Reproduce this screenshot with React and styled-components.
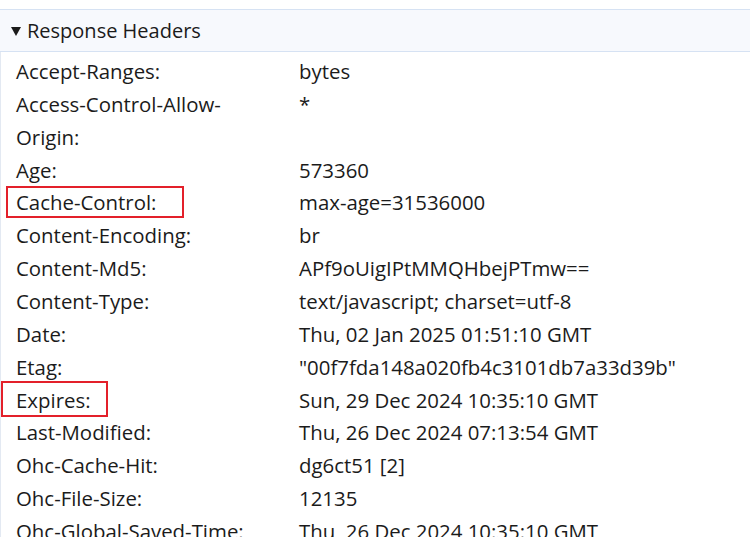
import React from 'react';
import styled, { createGlobalStyle } from 'styled-components';

const headers = [
  { name: 'Accept-Ranges:', value: 'bytes' },
  { name: 'Access-Control-Allow-Origin:', value: '*' },
  { name: 'Age:', value: '573360' },
  { name: 'Cache-Control:', value: 'max-age=31536000', mark: { left: -10, top: 0, width: 178, height: 32 } },
  { name: 'Content-Encoding:', value: 'br' },
  { name: 'Content-Md5:', value: 'APf9oUigIPtMMQHbejPTmw==' },
  { name: 'Content-Type:', value: 'text/javascript; charset=utf-8' },
  { name: 'Date:', value: 'Thu, 02 Jan 2025 01:51:10 GMT' },
  { name: 'Etag:', value: '"00f7fda148a020fb4c3101db7a33d39b"' },
  { name: 'Expires:', value: 'Sun, 29 Dec 2024 10:35:10 GMT', mark: { left: -15, top: -3, width: 107, height: 36 } },
  { name: 'Last-Modified:', value: 'Thu, 26 Dec 2024 07:13:54 GMT' },
  { name: 'Ohc-Cache-Hit:', value: 'dg6ct51 [2]' },
  { name: 'Ohc-File-Size:', value: '12135' },
  { name: 'Ohc-Global-Saved-Time:', value: 'Thu, 26 Dec 2024 10:35:10 GMT' },
];

const App = () => {
  return (
    <>
      <GlobalStyle />
      <Panel>
        <SectionHeader>
          <Arrow viewBox="0 0 10 9">
            <path d="M0 0 L10 0 L5 9 Z" fill="#1b1b1b" />
          </Arrow>
          Response Headers
        </SectionHeader>
        <HeaderList>
          {headers.map((item) => (
            <Row key={item.name}>
              <Name>
                {item.name}
                {item.mark && <Highlight $mark={item.mark} />}
              </Name>
              <Value>{item.value}</Value>
            </Row>
          ))}
        </HeaderList>
      </Panel>
    </>
  );
};

export default App;

const GlobalStyle = createGlobalStyle`
  html, body {
    margin: 0;
    padding: 0;
    background: #ffffff;
    overflow: hidden;
  }
  body {
    font-family: 'Open Sans', 'Noto Sans', sans-serif;
    color: #1b1b1b;
  }
`;

const Panel = styled.div`
  width: 750px;
  height: 537px;
  padding-top: 9px;
  box-sizing: border-box;
  overflow: hidden;
`;

const SectionHeader = styled.div`
  display: flex;
  align-items: center;
  gap: 6px;
  height: 41px;
  padding-left: 11px;
  background: #f7f9fd;
  border-top: 1px solid #d6e2f3;
  border-bottom: 1px solid #d6e2f3;
  font-size: 20px;
  color: #1b1b1b;
`;

const Arrow = styled.svg`
  width: 10px;
  height: 9px;
  margin-top: 1px;
`;

const HeaderList = styled.div`
  padding-top: 3px;
  border-left: 1px solid #e3e9f2;
`;

const Row = styled.div`
  display: grid;
  grid-template-columns: 298px 1fr;
  font-size: 20.4px;
  line-height: 32.86px;
`;

const Name = styled.div`
  position: relative;
  padding: 0 40px 0 15px;
  overflow-wrap: break-word;
`;

const Value = styled.div`
  white-space: nowrap;
`;

const Highlight = styled.span`
  position: absolute;
  top: ${(p) => p.$mark.top}px;
  left: ${(p) => 15 + p.$mark.left}px;
  width: ${(p) => p.$mark.width}px;
  height: ${(p) => p.$mark.height}px;
  border: 2px solid #e3202a;
  box-sizing: border-box;
`;
